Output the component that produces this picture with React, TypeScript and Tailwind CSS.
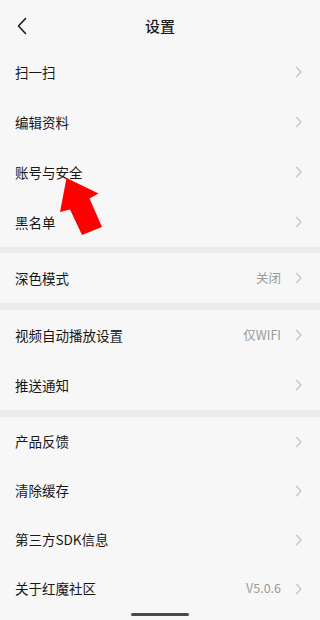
import React from 'react';

type Row = { label: string; value?: string; h?: string };

const groups: Row[][] = [
  [{ label: '扫一扫' }, { label: '编辑资料' }, { label: '账号与安全' }, { label: '黑名单' }],
  [{ label: '深色模式', value: '关闭' }],
  [{ label: '视频自动播放设置', value: '仅WIFI' }, { label: '推送通知' }],
  [
    { label: '产品反馈', h: 'h-[49px]' },
    { label: '清除缓存', h: 'h-[49px]' },
    { label: '第三方SDK信息', h: 'h-[49px]' },
    { label: '关于红魔社区', value: 'V5.0.6', h: 'h-[49px]' },
  ],
];

function Chevron() {
  return (
    <svg width="8" height="12" viewBox="0 0 8 12" fill="none" className="shrink-0">
      <path d="M1.5 1.2 L6 6 L1.5 10.8" stroke="#c6c6c8" strokeWidth="1.3" strokeLinecap="round" strokeLinejoin="round" />
    </svg>
  );
}

function SettingRow({ label, value, h = 'h-[50px]' }: Row) {
  return (
    <div className={`flex items-center ${h} pl-[15px] pr-[17px]`}>
      <span className="flex-1 text-[13.5px] text-[#161616]">{label}</span>
      {value && <span className="mr-[14px] text-[12.5px] text-[#9a9a9a]">{value}</span>}
      <Chevron />
    </div>
  );
}

export default function App() {
  return (
    <div
      className="relative w-[320px] h-[620px] overflow-hidden bg-[#f7f7f7]"
      style={{ fontFamily: '"Noto Sans CJK SC", "Noto Sans", sans-serif' }}
    >
      {/* Header */}
      <div className="relative flex items-center justify-center h-[47px]">
        <svg width="12" height="18" viewBox="0 0 12 18" fill="none" className="absolute left-[16px] top-[17px]">
          <path d="M9.5 1.5 L2.5 9 L9.5 16.5" stroke="#1c1c1c" strokeWidth="1.6" strokeLinecap="round" strokeLinejoin="round" />
        </svg>
        <span className="text-[15px] font-medium text-[#1c1c1c] pt-[5px]">设置</span>
      </div>

      {groups.map((rows, gi) => (
        <div key={gi}>
          {gi > 0 && <div className={gi === 1 ? 'h-[6px] bg-[#ececef]' : 'h-[7px] bg-[#ececef]'} />}
          {rows.map((r) => (
            <SettingRow key={r.label} {...r} />
          ))}
        </div>
      ))}

      {/* Home indicator */}
      <div className="flex justify-center">
        <div className="w-[58px] h-[2.5px] rounded-full bg-[#4a4a4a]" />
      </div>

      {/* Red annotation arrow */}
      <svg width="320" height="620" viewBox="0 0 320 620" className="absolute inset-0 pointer-events-none">
        <polygon
          points="66.5,178 98.5,193.5 89.5,198.5 102,227 82,235 70,209.5 60,212"
          fill="#ff0000"
        />
      </svg>
    </div>
  );
}
